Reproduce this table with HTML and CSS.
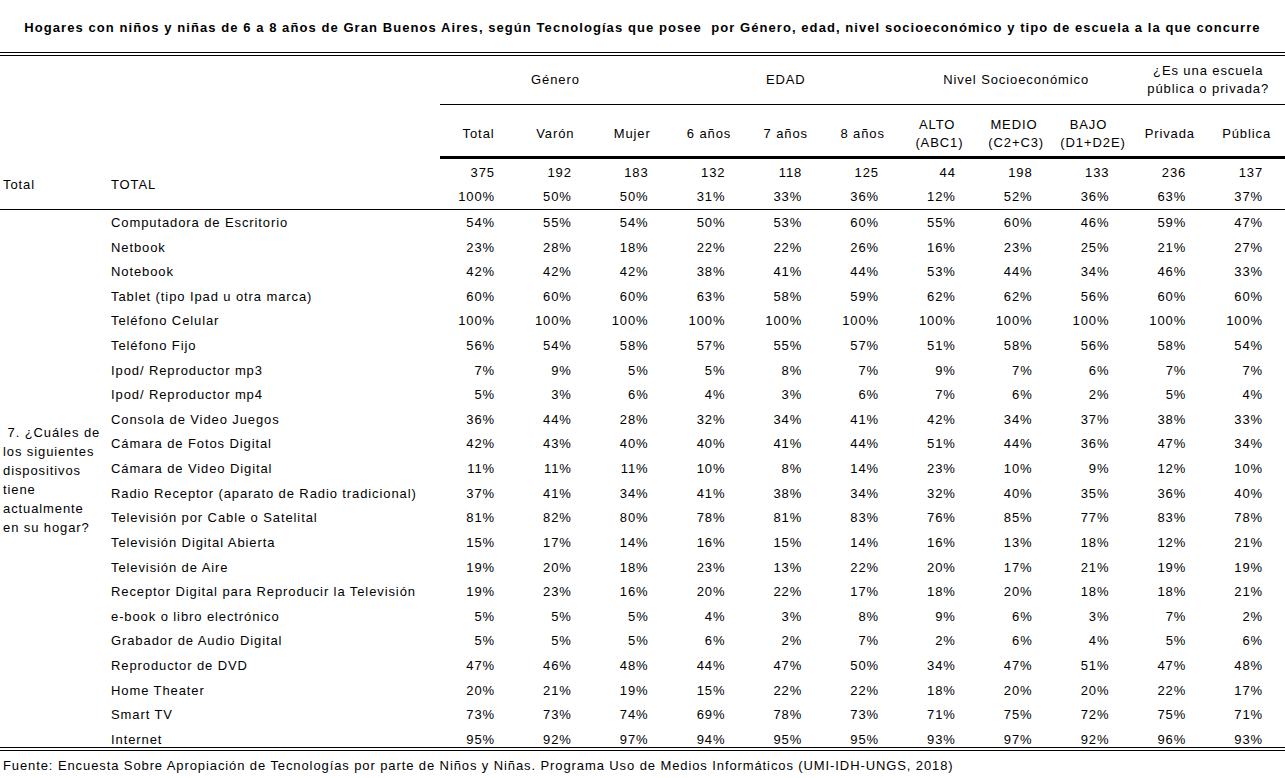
FILE: index.html
```html
<!DOCTYPE html>
<html lang="es">
<head>
<meta charset="utf-8">
<title>Hogares con niños y niñas de 6 a 8 años</title>
<link rel="stylesheet" href="styles.css">
</head>
<body>
<div class="title">Hogares con niños y niñas de 6 a 8 años de Gran Buenos Aires, según Tecnologías que posee&nbsp; por Género, edad, nivel socioeconómico y tipo de escuela a la que concurre</div>
<table class="grid">
<colgroup>
<col class="c-q"><col class="c-item">
<col class="c-n"><col class="c-n"><col class="c-n"><col class="c-n"><col class="c-n"><col class="c-n"><col class="c-n"><col class="c-n"><col class="c-n"><col class="c-n"><col class="c-n">
</colgroup>
<thead>
<tr class="h1">
<th class="blank" rowspan="2"></th><th class="blank" rowspan="2"></th>
<th class="grp" colspan="3">Género</th>
<th class="grp" colspan="3">EDAD</th>
<th class="grp" colspan="3">Nivel Socioeconómico</th>
<th class="grp" colspan="2">¿Es una escuela<br>pública o privada?</th>
</tr>
<tr class="h2">
<th class="sub">Total</th><th class="sub">Varón</th><th class="sub">Mujer</th>
<th class="sub">6 años</th><th class="sub">7 años</th><th class="sub">8 años</th>
<th class="sub">ALTO&nbsp;<br>(ABC1)</th><th class="sub">MEDIO&nbsp;<br>(C2+C3)</th><th class="sub">BAJO&nbsp;&nbsp;<br>(D1+D2E)</th>
<th class="sub">Privada</th><th class="sub">Pública</th>
</tr>
</thead>
<tbody>
<tr class="tot">
<td class="q">Total</td><td class="item">TOTAL</td>
<td class="n">375<br>100%</td><td class="n">192<br>50%</td><td class="n">183<br>50%</td>
<td class="n">132<br>31%</td><td class="n">118<br>33%</td><td class="n">125<br>36%</td>
<td class="n">44<br>12%</td><td class="n">198<br>52%</td><td class="n">133<br>36%</td>
<td class="n">236<br>63%</td><td class="n">137<br>37%</td>
</tr>
<tr class="row first">
<td class="qtext" rowspan="22">&nbsp;7. ¿Cuáles de<br>los siguientes<br>dispositivos<br>tiene<br>actualmente<br>en su hogar?</td>
<td class="item">Computadora de Escritorio</td><td class="n">54%</td><td class="n">55%</td><td class="n">54%</td><td class="n">50%</td><td class="n">53%</td><td class="n">60%</td><td class="n">55%</td><td class="n">60%</td><td class="n">46%</td><td class="n">59%</td><td class="n">47%</td></tr>
<tr class="row"><td class="item">Netbook</td><td class="n">23%</td><td class="n">28%</td><td class="n">18%</td><td class="n">22%</td><td class="n">22%</td><td class="n">26%</td><td class="n">16%</td><td class="n">23%</td><td class="n">25%</td><td class="n">21%</td><td class="n">27%</td></tr>
<tr class="row"><td class="item">Notebook</td><td class="n">42%</td><td class="n">42%</td><td class="n">42%</td><td class="n">38%</td><td class="n">41%</td><td class="n">44%</td><td class="n">53%</td><td class="n">44%</td><td class="n">34%</td><td class="n">46%</td><td class="n">33%</td></tr>
<tr class="row"><td class="item">Tablet (tipo Ipad u otra marca)</td><td class="n">60%</td><td class="n">60%</td><td class="n">60%</td><td class="n">63%</td><td class="n">58%</td><td class="n">59%</td><td class="n">62%</td><td class="n">62%</td><td class="n">56%</td><td class="n">60%</td><td class="n">60%</td></tr>
<tr class="row"><td class="item">Teléfono Celular</td><td class="n">100%</td><td class="n">100%</td><td class="n">100%</td><td class="n">100%</td><td class="n">100%</td><td class="n">100%</td><td class="n">100%</td><td class="n">100%</td><td class="n">100%</td><td class="n">100%</td><td class="n">100%</td></tr>
<tr class="row"><td class="item">Teléfono Fijo</td><td class="n">56%</td><td class="n">54%</td><td class="n">58%</td><td class="n">57%</td><td class="n">55%</td><td class="n">57%</td><td class="n">51%</td><td class="n">58%</td><td class="n">56%</td><td class="n">58%</td><td class="n">54%</td></tr>
<tr class="row"><td class="item">Ipod/ Reproductor mp3</td><td class="n">7%</td><td class="n">9%</td><td class="n">5%</td><td class="n">5%</td><td class="n">8%</td><td class="n">7%</td><td class="n">9%</td><td class="n">7%</td><td class="n">6%</td><td class="n">7%</td><td class="n">7%</td></tr>
<tr class="row"><td class="item">Ipod/ Reproductor mp4</td><td class="n">5%</td><td class="n">3%</td><td class="n">6%</td><td class="n">4%</td><td class="n">3%</td><td class="n">6%</td><td class="n">7%</td><td class="n">6%</td><td class="n">2%</td><td class="n">5%</td><td class="n">4%</td></tr>
<tr class="row"><td class="item">Consola de Video Juegos</td><td class="n">36%</td><td class="n">44%</td><td class="n">28%</td><td class="n">32%</td><td class="n">34%</td><td class="n">41%</td><td class="n">42%</td><td class="n">34%</td><td class="n">37%</td><td class="n">38%</td><td class="n">33%</td></tr>
<tr class="row"><td class="item">Cámara de Fotos Digital</td><td class="n">42%</td><td class="n">43%</td><td class="n">40%</td><td class="n">40%</td><td class="n">41%</td><td class="n">44%</td><td class="n">51%</td><td class="n">44%</td><td class="n">36%</td><td class="n">47%</td><td class="n">34%</td></tr>
<tr class="row"><td class="item">Cámara de Video Digital</td><td class="n">11%</td><td class="n">11%</td><td class="n">11%</td><td class="n">10%</td><td class="n">8%</td><td class="n">14%</td><td class="n">23%</td><td class="n">10%</td><td class="n">9%</td><td class="n">12%</td><td class="n">10%</td></tr>
<tr class="row"><td class="item">Radio Receptor (aparato de Radio tradicional)</td><td class="n">37%</td><td class="n">41%</td><td class="n">34%</td><td class="n">41%</td><td class="n">38%</td><td class="n">34%</td><td class="n">32%</td><td class="n">40%</td><td class="n">35%</td><td class="n">36%</td><td class="n">40%</td></tr>
<tr class="row"><td class="item">Televisión por Cable o Satelital</td><td class="n">81%</td><td class="n">82%</td><td class="n">80%</td><td class="n">78%</td><td class="n">81%</td><td class="n">83%</td><td class="n">76%</td><td class="n">85%</td><td class="n">77%</td><td class="n">83%</td><td class="n">78%</td></tr>
<tr class="row"><td class="item">Televisión Digital Abierta</td><td class="n">15%</td><td class="n">17%</td><td class="n">14%</td><td class="n">16%</td><td class="n">15%</td><td class="n">14%</td><td class="n">16%</td><td class="n">13%</td><td class="n">18%</td><td class="n">12%</td><td class="n">21%</td></tr>
<tr class="row"><td class="item">Televisión de Aire</td><td class="n">19%</td><td class="n">20%</td><td class="n">18%</td><td class="n">23%</td><td class="n">13%</td><td class="n">22%</td><td class="n">20%</td><td class="n">17%</td><td class="n">21%</td><td class="n">19%</td><td class="n">19%</td></tr>
<tr class="row"><td class="item">Receptor Digital para Reproducir la Televisión</td><td class="n">19%</td><td class="n">23%</td><td class="n">16%</td><td class="n">20%</td><td class="n">22%</td><td class="n">17%</td><td class="n">18%</td><td class="n">20%</td><td class="n">18%</td><td class="n">18%</td><td class="n">21%</td></tr>
<tr class="row"><td class="item">e-book o libro electrónico</td><td class="n">5%</td><td class="n">5%</td><td class="n">5%</td><td class="n">4%</td><td class="n">3%</td><td class="n">8%</td><td class="n">9%</td><td class="n">6%</td><td class="n">3%</td><td class="n">7%</td><td class="n">2%</td></tr>
<tr class="row"><td class="item">Grabador de Audio Digital</td><td class="n">5%</td><td class="n">5%</td><td class="n">5%</td><td class="n">6%</td><td class="n">2%</td><td class="n">7%</td><td class="n">2%</td><td class="n">6%</td><td class="n">4%</td><td class="n">5%</td><td class="n">6%</td></tr>
<tr class="row"><td class="item">Reproductor de DVD</td><td class="n">47%</td><td class="n">46%</td><td class="n">48%</td><td class="n">44%</td><td class="n">47%</td><td class="n">50%</td><td class="n">34%</td><td class="n">47%</td><td class="n">51%</td><td class="n">47%</td><td class="n">48%</td></tr>
<tr class="row"><td class="item">Home Theater</td><td class="n">20%</td><td class="n">21%</td><td class="n">19%</td><td class="n">15%</td><td class="n">22%</td><td class="n">22%</td><td class="n">18%</td><td class="n">20%</td><td class="n">20%</td><td class="n">22%</td><td class="n">17%</td></tr>
<tr class="row"><td class="item">Smart TV</td><td class="n">73%</td><td class="n">73%</td><td class="n">74%</td><td class="n">69%</td><td class="n">78%</td><td class="n">73%</td><td class="n">71%</td><td class="n">75%</td><td class="n">72%</td><td class="n">75%</td><td class="n">71%</td></tr>
<tr class="row"><td class="item">Internet</td><td class="n">95%</td><td class="n">92%</td><td class="n">97%</td><td class="n">94%</td><td class="n">95%</td><td class="n">95%</td><td class="n">93%</td><td class="n">97%</td><td class="n">92%</td><td class="n">96%</td><td class="n">93%</td></tr>
</tbody>
</table>
<div class="source">Fuente: Encuesta Sobre Apropiación de Tecnologías por parte de Niños y Niñas. Programa Uso de Medios Informáticos (UMI-IDH-UNGS, 2018)</div>
</body>
</html>
```
FILE: styles.css
```css
html, body {
  margin: 0;
  padding: 0;
  background: #fff;
  color: #000;
  font-family: "Liberation Sans", Arial, sans-serif;
  font-size: 13px;
  letter-spacing: 0.9px;
}

.title {
  box-sizing: border-box;
  height: 52px;
  padding-top: 20px;
  line-height: 16px;
  text-align: center;
  font-weight: bold;
  letter-spacing: 1.07px;
  white-space: nowrap;
}

.grid {
  width: 1285px;
  table-layout: fixed;
  border-collapse: separate;
  border-spacing: 0;
  border-top: 4px double #000;
  border-bottom: 4px double #000;
}

.c-q { width: 108px; }
.c-item { width: 332.2px; }
.c-n { width: 76.8px; }

.grid th,
.grid td {
  padding: 0;
  font-weight: normal;
  white-space: nowrap;
}

.h1 { height: 49px; }
.grp {
  border-bottom: 1px solid #000;
  text-align: center;
  vertical-align: middle;
  line-height: 18px;
}

.h2 { height: 54px; }
.grid .sub {
  border-bottom: 3px solid #000;
  text-align: center;
  vertical-align: middle;
  line-height: 18px;
  padding-top: 6px;
}

.tot { height: 51px; }
.grid .tot td {
  border-bottom: 1px solid #000;
  vertical-align: middle;
  line-height: 24px;
  padding-top: 2px;
}

.grid .q,
.grid .item { padding-left: 3px; text-align: left; }
.grid .n { text-align: right; padding-right: 22px; }

.row { height: 24.62px; }
.row.first { height: 20px; }
.row td {
  vertical-align: bottom;
  line-height: 14px;
}
.grid .row td.qtext {
  vertical-align: middle;
  line-height: 19px;
  padding-left: 3px;
  padding-top: 4px;
}

.source {
  margin-top: 7px;
  padding-left: 3px;
  line-height: 16px;
}
```
